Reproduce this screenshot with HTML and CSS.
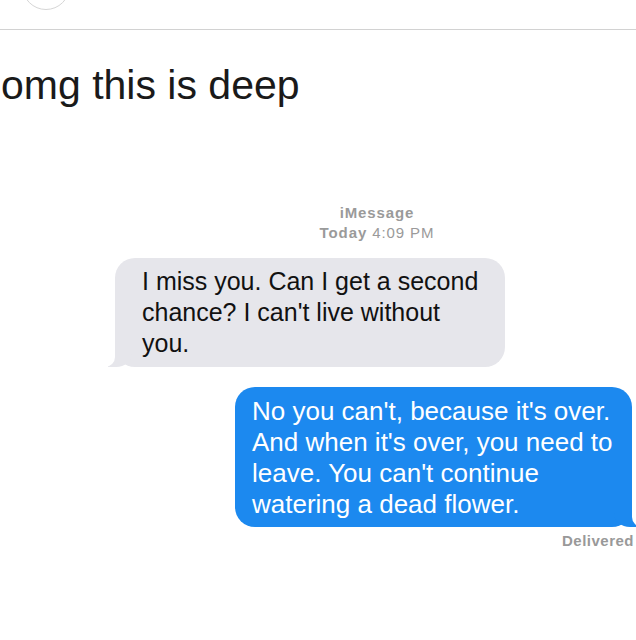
FILE: index.html
```html
<!DOCTYPE html>
<html>
<head>
<meta charset="utf-8">
<link rel="stylesheet" href="styles.css">
</head>
<body>
<div class="page">
  <header class="topbar">
    <div class="avatar"></div>
  </header>
  <h1 class="caption">omg this is deep</h1>
  <div class="chat">
    <div class="meta">
      <div class="meta-line">iMessage</div>
      <div class="meta-line"><b>Today</b> 4:09 PM</div>
    </div>
    <div class="row row-in">
      <div class="bubble in">I miss you. Can I get a second<br>chance? I can't live without<br>you.</div>
    </div>
    <div class="row row-out">
      <div class="bubble out">No you can't, because it's over.<br>And when it's over, you need to<br>leave. You can't continue<br>watering a dead flower.</div>
    </div>
    <div class="status">Delivered</div>
  </div>
</div>
</body>
</html>
```
FILE: styles.css
```css
html, body {
  margin: 0;
  padding: 0;
  background: #fff;
}
.page {
  width: 636px;
  height: 640px;
  overflow: hidden;
  font-family: "Liberation Sans", Arial, sans-serif;
}
.topbar {
  height: 29px;
  border-bottom: 1px solid #d2d2d2;
  overflow: hidden;
}
.avatar {
  width: 48px;
  height: 48px;
  margin: -38px 0 0 22px;
  border: 1px solid #d6d6d6;
  border-radius: 50%;
  box-sizing: border-box;
}
.caption {
  margin: 31px 0 0 0;
  padding-left: 1px;
  font-weight: normal;
  font-size: 41px;
  line-height: 48px;
  color: #1a1a1a;
}
.chat {
  display: flex;
  flex-direction: column;
}
.meta {
  margin-top: 94px;
  padding-left: 314px;
  width: 126px;
  text-align: center;
  color: #9a9a9a;
  font-size: 15px;
  line-height: 20px;
  letter-spacing: 0.9px;
}
.meta b {
  font-weight: 600;
}
.meta-line:first-child {
  font-weight: 600;
}
.row {
  display: flex;
}
.row-in {
  margin-top: 15px;
  padding-left: 115px;
}
.row-out {
  margin-top: 20px;
  padding-left: 235px;
}
.bubble {
  position: relative;
  box-sizing: border-box;
  border-radius: 20px;
  font-size: 25px;
  line-height: 31px;
}
.in {
  width: 390px;
  background: #e6e6eb;
  color: #111;
  padding: 8px 16px 8px 27px;
}
.in::before {
  content: "";
  position: absolute;
  left: -7px;
  bottom: 0;
  width: 24px;
  height: 22px;
  background: #e6e6eb;
  border-bottom-right-radius: 16px 14px;
}
.in::after {
  content: "";
  position: absolute;
  left: -14px;
  bottom: 0;
  width: 14px;
  height: 24px;
  background: #fff;
  border-bottom-right-radius: 10px;
}
.out {
  width: 397px;
  background: #1c89ef;
  color: #fff;
  padding: 9px 8px 7px 17px;
  font-size: 26px;
}
.out::before {
  content: "";
  position: absolute;
  right: -6px;
  bottom: 0;
  width: 24px;
  height: 22px;
  background: #1c89ef;
  border-bottom-left-radius: 16px 14px;
}
.out::after {
  content: "";
  position: absolute;
  right: -14px;
  bottom: 0;
  width: 14px;
  height: 24px;
  background: #fff;
  border-bottom-left-radius: 10px;
}
.status {
  margin-top: 5px;
  padding-left: 562px;
  white-space: nowrap;
  color: #999;
  font-size: 15px;
  font-weight: bold;
  letter-spacing: 0.5px;
}
```
